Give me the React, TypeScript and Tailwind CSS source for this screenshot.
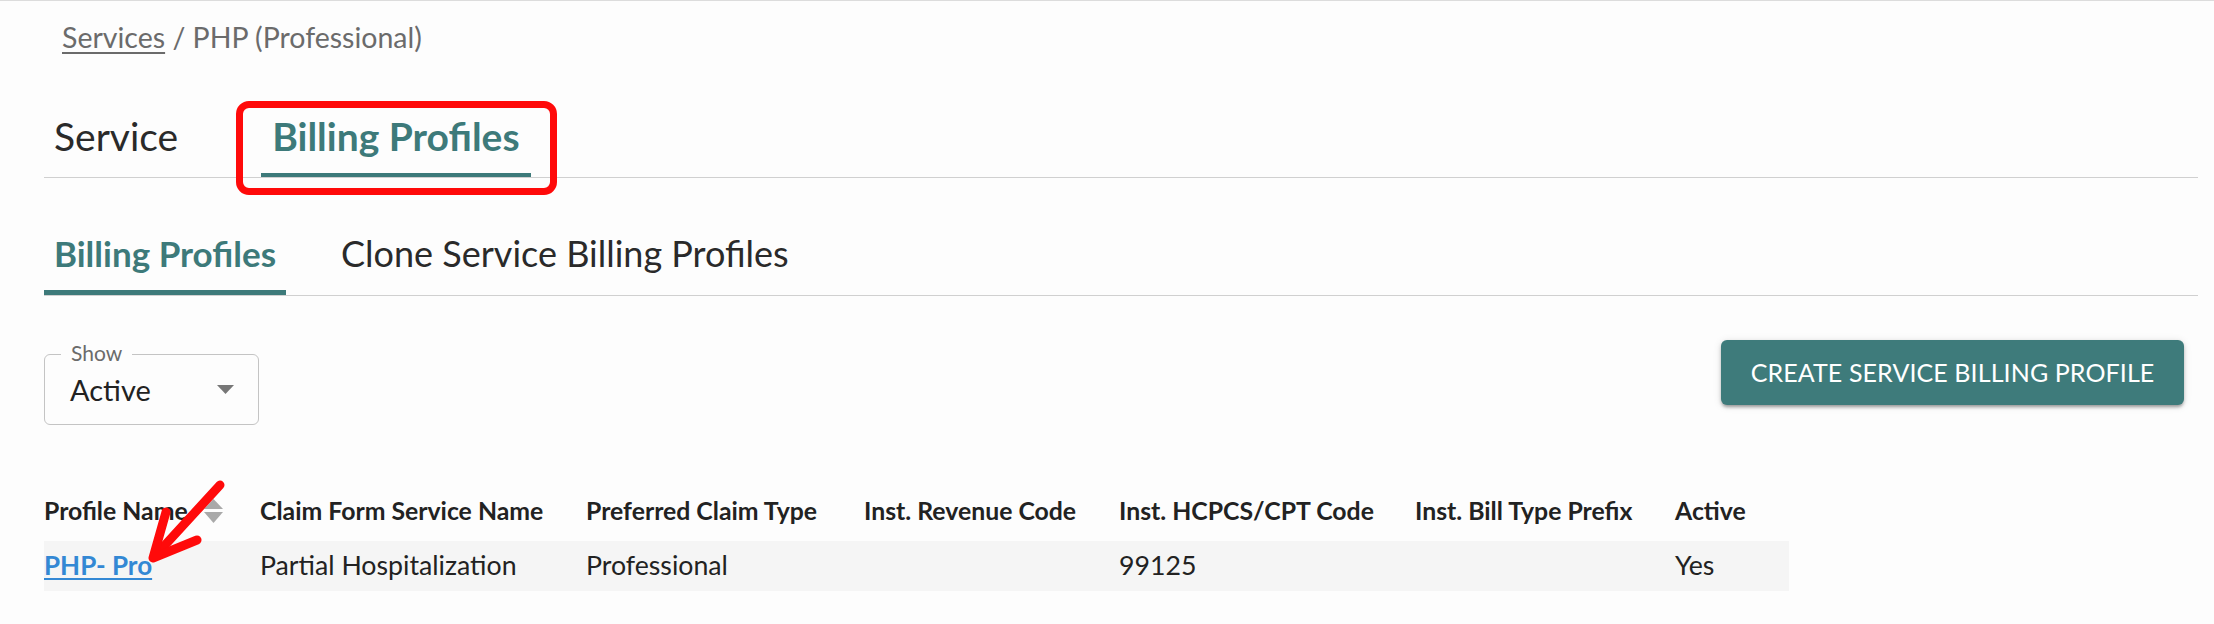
import React from 'react';

const teal = 'text-[#3d7a7a]';

interface Row {
  name: string
  claimName: string
  claimType: string
  revenueCode: string
  hcpcs: string
  billPrefix: string
  active: string
}

const rows: Row[] = [
  {
    name: 'PHP- Pro',
    claimName: 'Partial Hospitalization',
    claimType: 'Professional',
    revenueCode: '',
    hcpcs: '99125',
    billPrefix: '',
    active: 'Yes',
  },
];

const SortIcon = () => (
  <svg width="19" height="24" viewBox="0 0 19 24" className="ml-[16px] shrink-0">
    <polygon points="0,10 19,10 9.5,0" fill="#a9a9a9" />
    <polygon points="0,13 19,13 9.5,24" fill="#a9a9a9" />
  </svg>
);

const App: React.FC = () => {
  return (
    <div className="relative min-h-screen bg-[#fdfdfd] font-[Lato,sans-serif]">
      <div className="h-px bg-[#dcdcdc]" />
      <div className="pl-[44px] pr-[16px]">
        {/* breadcrumb */}
        <div className="pt-[19px] pl-[18px] text-[28.5px] leading-[34px] text-[#6b6b6b]">
          <span className="underline decoration-[2px] underline-offset-[4px]">Services</span> / PHP (Professional)
        </div>

        {/* top tabs */}
        <div className="mt-[49px] flex gap-[73px] border-b border-[#d0d0d0]">
          <div className="px-[10px] pt-[10px] pb-[13px] border-b-4 border-transparent text-[39px] leading-[47px] text-[#2a2a2a]">
            Service
          </div>
          <div className={`relative px-[11px] pt-[10px] pb-[13px] border-b-4 border-[#3d7a7a] text-[39px] leading-[47px] font-bold ${teal}`}>
            Billing Profiles
            <div className="absolute -left-[25px] -right-[26px] -top-[2px] -bottom-[22px] border-[7px] border-[#ff0a0a] rounded-[13px] pointer-events-none" />
          </div>
        </div>

        {/* sub tabs */}
        <div className="mt-[44px] flex gap-[45px] border-b border-[#d0d0d0]">
          <div className={`px-[10px] pt-[10px] pb-[16px] border-b-[5px] border-[#3d7a7a] text-[35px] leading-[42px] font-bold ${teal}`}>
            Billing Profiles
          </div>
          <div className="px-[10px] pt-[10px] pb-[16px] border-b-[5px] border-transparent text-[36px] leading-[42px] text-[#2a2a2a]">
            Clone Service Billing Profiles
          </div>
        </div>

        {/* filter + action */}
        <div className="mt-[44px] flex justify-between items-start">
          <div className="relative mt-[14px] w-[215px] h-[71px] border border-[#c4c4c4] rounded-[6px] flex items-center pl-[25px] pr-[24px]">
            <span className="absolute left-[16px] -top-[15px] px-[10px] bg-[#fdfdfd] text-[21px] leading-[25px] text-[#6b6b6b]">
              Show
            </span>
            <span className="text-[29px] leading-[35px] text-[#222]">Active</span>
            <svg width="17" height="9" viewBox="0 0 17 9" className="ml-auto">
              <polygon points="0,0 17,0 8.5,9" fill="#777" />
            </svg>
          </div>
          <button className="mr-[14px] h-[65px] w-[463px] rounded-[6px] bg-[#3e7b7b] text-white text-[25px] uppercase tracking-[0.1px] shadow-[0_3px_3px_-1px_rgba(0,0,0,0.25),0_2px_4px_0_rgba(0,0,0,0.14),0_1px_8px_0_rgba(0,0,0,0.1)]">
            Create Service Billing Profile
          </button>
        </div>

        {/* table */}
        <table className="mt-[63px] w-[1745px] table-fixed border-collapse text-[26.7px] leading-[29px] text-[#222]">
          <thead>
            <tr className="text-left text-[24.8px]">
              <th className="w-[216px] pt-[8px] pb-[16px] font-bold">
                <div className="flex items-center">
                  Profile Name
                  <SortIcon />
                </div>
              </th>
              <th className="w-[326px] pt-[8px] pb-[16px] font-bold">Claim Form Service Name</th>
              <th className="w-[278px] pt-[8px] pb-[16px] font-bold">Preferred Claim Type</th>
              <th className="w-[255px] pt-[8px] pb-[16px] font-bold">Inst. Revenue Code</th>
              <th className="w-[296px] pt-[8px] pb-[16px] font-bold">Inst. HCPCS/CPT Code</th>
              <th className="w-[260px] pt-[8px] pb-[16px] font-bold">Inst. Bill Type Prefix</th>
              <th className="w-[114px] pt-[8px] pb-[16px] font-bold">Active</th>
            </tr>
          </thead>
          <tbody>
            {rows.map((r) => (
              <tr key={r.name} className="bg-[#f5f5f5]">
                <td className="pt-[10px] pb-[11px]">
                  <a href="#" className="text-[26px] font-bold text-[#3388d4] underline decoration-[2px] underline-offset-[3px]">{r.name}</a>
                </td>
                <td className="pt-[10px] pb-[11px]">{r.claimName}</td>
                <td className="pt-[10px] pb-[11px]">{r.claimType}</td>
                <td className="pt-[10px] pb-[11px]">{r.revenueCode}</td>
                <td className="pt-[10px] pb-[11px]">{r.hcpcs}</td>
                <td className="pt-[10px] pb-[11px]">{r.billPrefix}</td>
                <td className="pt-[10px] pb-[11px]">{r.active}</td>
              </tr>
            ))}
          </tbody>
        </table>
      </div>

      {/* annotation arrow */}
      <svg width="2214" height="624" className="absolute top-0 left-0 pointer-events-none">
        <path d="M220 485 L155 556" stroke="#ff0a0a" strokeWidth="9" strokeLinecap="round" fill="none" />
        <path d="M166 512 L153 558 L197 540" stroke="#ff0a0a" strokeWidth="9" strokeLinecap="round" strokeLinejoin="round" fill="none" />
      </svg>
    </div>
  );
};

export default App;
